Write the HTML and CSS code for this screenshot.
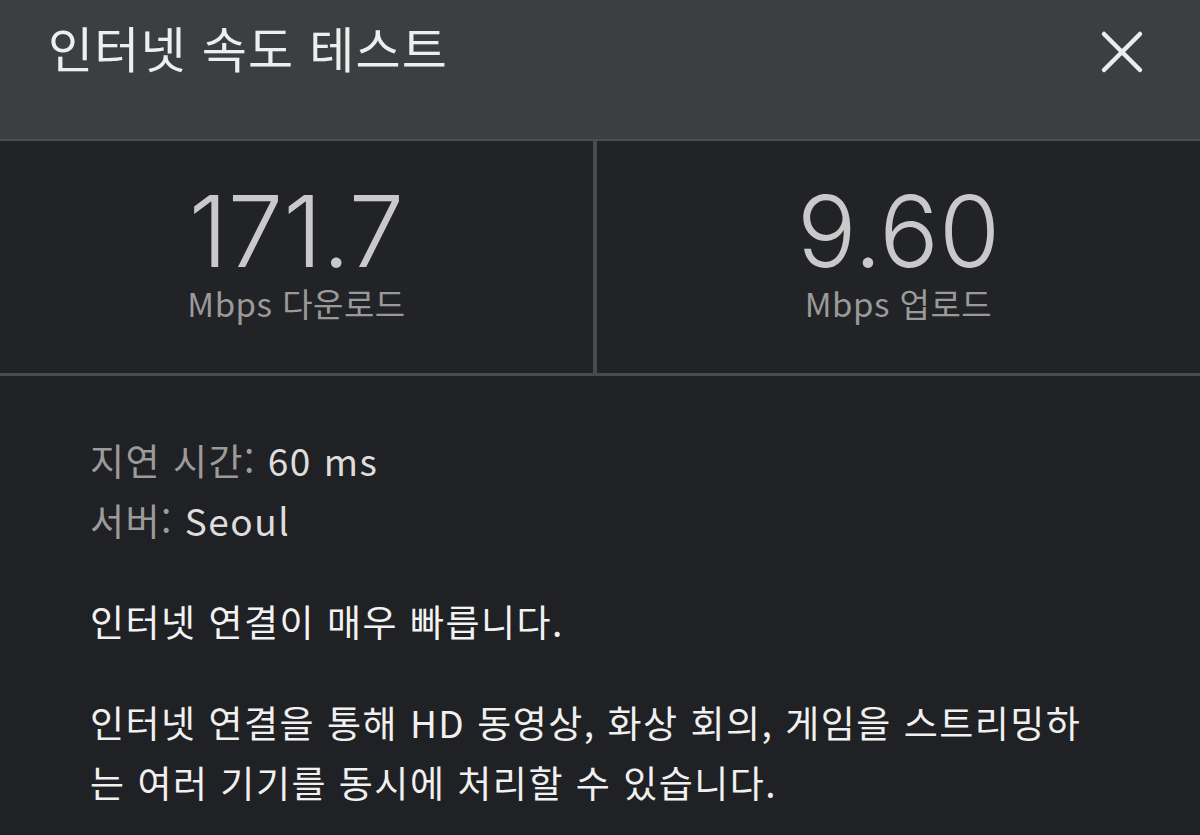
FILE: index.html
```html
<!DOCTYPE html>
<html lang="ko">
<head>
    <meta charset="utf-8">
    <title>인터넷 속도 테스트</title>
    <link rel="stylesheet" href="styles.css">
</head>
<body>
    <div class="dialog">
        <!-- title bar -->
        <div class="header">
            <h1>인터넷 속도 테스트</h1>
            <button class="close" aria-label="닫기">
                <svg width="44" height="44" viewBox="0 0 44 44">
                    <path d="M4 4 L40 40 M40 4 L4 40" stroke="#ededed" stroke-width="4.5" stroke-linecap="round" fill="none"/>
                </svg>
            </button>
        </div>
        <!-- results -->
        <div class="stats">
            <div class="stat">
                <div class="value">171.7</div>
                <div class="unit">Mbps 다운로드</div>
            </div>
            <div class="stat">
                <div class="value">9.60</div>
                <div class="unit">Mbps 업로드</div>
            </div>
        </div>
        <!-- details -->
        <div class="details">
            <div class="meta">
                <p><span class="label">지연 시간:</span> 60 ms</p>
                <p><span class="label">서버:</span> Seoul</p>
            </div>
            <p class="verdict">인터넷 연결이 매우 빠릅니다.</p>
            <p class="desc">인터넷 연결을 통해 HD 동영상, 화상 회의, 게임을 스트리밍하<br>는 여러 기기를 동시에 처리할 수 있습니다.</p>
        </div>
    </div>
</body>
</html>
```

FILE: styles.css
```css
html, body {
    margin: 0;
    height: 100%;
}
body {
    background-color: #202124;
    font-family: "Noto Sans CJK KR", "Noto Sans", sans-serif;
    color: #e8e8e8;
}
.dialog {
    width: 1200px;
}
.header {
    height: 139px;
    background-color: #3c3f42;
    border-bottom: 2px solid #4a4d50;
    display: flex;
    align-items: flex-start;
    justify-content: space-between;
    padding: 0 56px 0 48px;
}
h1 {
    margin: 12px 0 0;
    font-size: 49px;
    font-weight: 400;
    letter-spacing: 1.2px;
    color: #eeeeee;
    line-height: 70px;
}
.close {
    background: none;
    border: none;
    padding: 0;
    margin-top: 30px;
    cursor: pointer;
}
.stats {
    display: grid;
    grid-template-columns: 597px 1fr;
    height: 232px;
    background-color: #222326;
    border-bottom: 3px solid #4a4b4f;
}
.stat {
    text-align: center;
    padding-top: 40px;
}
.stat:first-child {
    border-right: 4px solid #4a4b4f;
}
.value {
    font-family: Inter, "Noto Sans", sans-serif;
    font-size: 99px;
    font-weight: 300;
    line-height: 100px;
    color: #c9c9c9;
}
.unit {
    font-size: 33px;
    letter-spacing: 0.5px;
    color: #9a9a9a;
    line-height: 44px;
    margin-top: 0;
}
.details {
    padding: 54px 40px 0 90px;
}
.details p {
    margin: 0;
    font-size: 37px;
    letter-spacing: 1.5px;
    line-height: 60px;
}
.meta p {
    color: #dddddd;
}
.label {
    color: #9b9b9b;
}
.details .verdict {
    margin-top: 41px;
    color: #f2f2f2;
}
.details .desc {
    margin-top: 41px;
    color: #f0f0f0;
}
```
